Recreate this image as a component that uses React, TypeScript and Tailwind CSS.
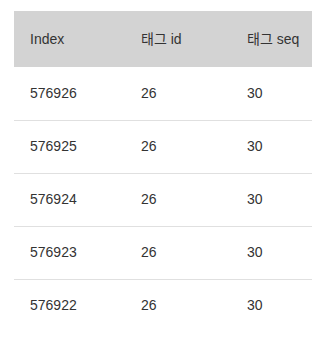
import React from 'react';

const rows = ['576926', '576925', '576924', '576923', '576922'];

export default function App() {
	return (
		<div className="w-[312px] h-[347px] overflow-hidden bg-white pl-[14px] pt-[11px]" style={{ fontFamily: '"Liberation Sans", Arial, "Noto Sans CJK KR", sans-serif' }}>
			<table className="w-[330px] border-collapse text-[14px] text-[#333]">
				<thead>
					<tr className="bg-[#d3d3d3] h-[56px]">
						<th className="w-[111px] pl-4 text-left font-normal">Index</th>
						<th className="w-[106px] pl-4 text-left font-normal">태그 id</th>
						<th className="pl-4 text-left font-normal">태그 seq</th>
					</tr>
				</thead>
				<tbody>
					{rows.map((id, i) => (
						<tr key={id} className={`h-[53px] ${i < rows.length - 1 ? 'border-b border-[#e0e0e0]' : ''}`}>
							<td className="pl-4">{id}</td>
							<td className="pl-4">26</td>
							<td className="pl-4">30</td>
						</tr>
					))}
				</tbody>
			</table>
		</div>
	);
}
